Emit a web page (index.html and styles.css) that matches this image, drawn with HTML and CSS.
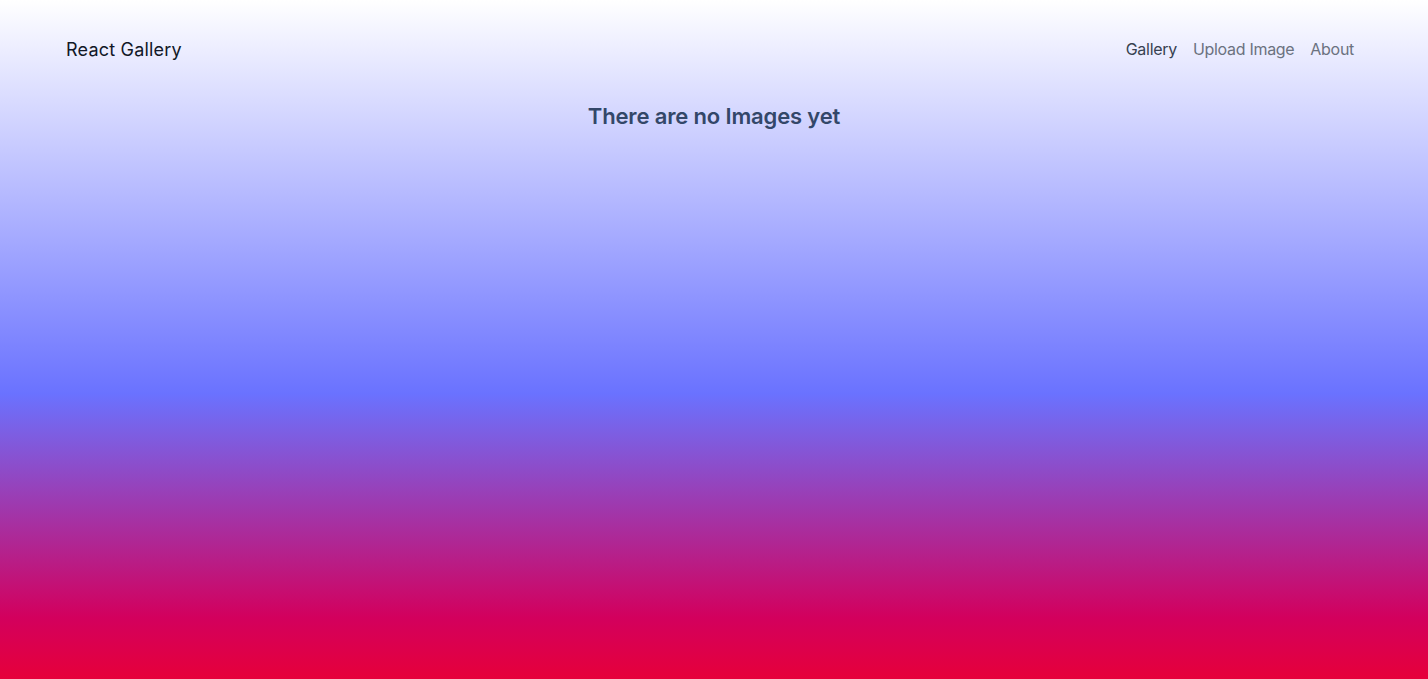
FILE: index.html
```html
<!DOCTYPE html>
<html lang="en">
<head>
<meta charset="utf-8">
<title>React Gallery</title>
<link rel="stylesheet" href="styles.css">
</head>
<body>
<div class="page">
  <header class="header">
    <a class="brand" href="#">React Gallery</a>
    <nav class="nav">
      <a class="nav-link active" href="#">Gallery</a>
      <a class="nav-link" href="#">Upload Image</a>
      <a class="nav-link" href="#">About</a>
    </nav>
  </header>
  <main class="main">
    <h1 class="empty">There are no Images yet</h1>
  </main>
</div>
</body>
</html>
```

FILE: styles.css
```css
html, body {
  margin: 0;
  padding: 0;
}
body {
  font-family: Inter, "Noto Sans", sans-serif;
  min-height: 100vh;
  background: linear-gradient(to bottom, #ffffff 0%, #6a72ff 58%, #d3005d 91%, #e6003a 100%);
}
.page {
  min-height: 679px;
}
.header {
  display: flex;
  justify-content: space-between;
  align-items: center;
  padding: 36px 74px 0 66px;
  height: 26px;
}
.brand {
  font-size: 18px;
  color: #111827;
  text-decoration: none;
  letter-spacing: 0.2px;
}
.nav {
  display: flex;
  gap: 16px;
}
.nav-link {
  font-size: 16px;
  color: #6b7280;
  text-decoration: none;
  letter-spacing: -0.3px;
}
.nav-link.active {
  color: #374151;
}
.main {
  display: flex;
  justify-content: center;
  padding-top: 38px;
}
.empty {
  margin: 0;
  font-size: 22px;
  font-weight: 600;
  color: #334769;
  line-height: 32px;
  letter-spacing: -0.15px;
}
```
